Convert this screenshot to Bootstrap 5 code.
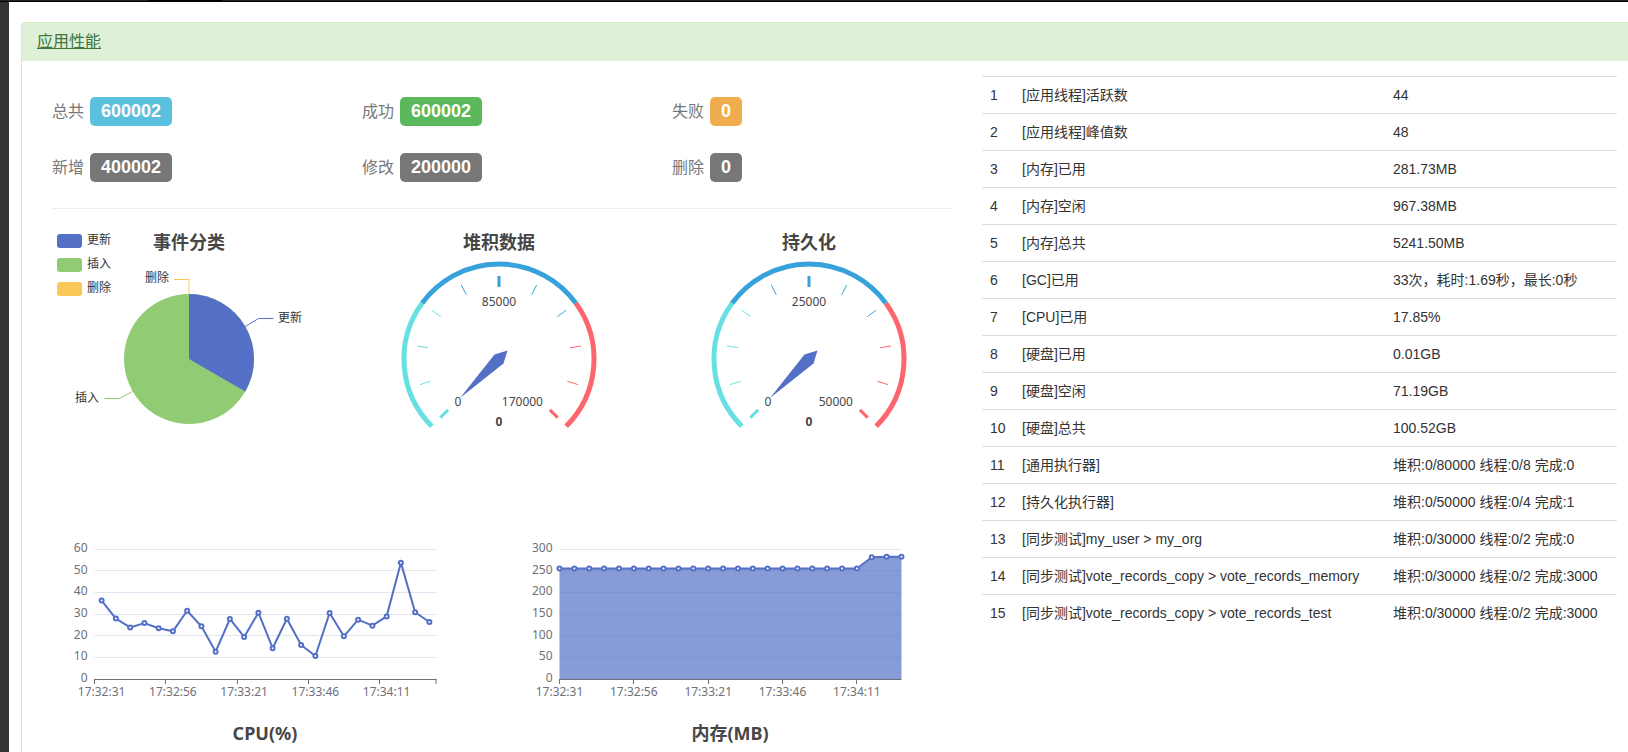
<!DOCTYPE html>
<html lang="zh-CN">
<head>
<meta charset="utf-8">
<meta name="viewport" content="width=device-width, initial-scale=1">
<title>应用性能</title>
<link rel="stylesheet" href="https://cdn.jsdelivr.net/npm/bootstrap@5.3.0/dist/css/bootstrap.min.css">
<style>
  body { font-family: "Liberation Sans", "Noto Sans CJK SC", sans-serif; font-size: 14px; line-height: 20px; color: #333; }
  .topbar { height: 2px; background: linear-gradient(#222 50%, #000 50%); }
  .topbar-tab { width: 74px; height: 2px; margin-left: 148px; background: #000; }
  .side-strip { width: 9px; background: #333; }
  .app-shell { height: calc(100vh - 2px); overflow: hidden; }
  .perf-panel { margin: 20px 0 0 12px; border: 1px solid #d6e9c6; border-right: 0; border-radius: 4px 0 0 0; }
  .perf-heading { background: #dff0d8; padding: 10px 15px; font-size: 16px; line-height: 18px; border-radius: 3px 0 0 0; }
  .perf-heading a { color: #3c763d; }
  .perf-body { padding: 15px 11px 15px 15px; }
  .perf-grid { display: grid; grid-template-columns: 930fr 635fr; column-gap: 15px; }
  .gut { --bs-gutter-x: 30px; }
  .stats { padding: 21px 0 26px; row-gap: 27px; }
  .stat { display: flex; align-items: center; gap: 6px; color: #777; font-size: 16px; }
  .stat-num { color: #fff; background: #777; font-size: 18px; font-weight: 700; line-height: 19px; padding: 5px 11px; border-radius: 5px; }
  .bg-total { background: #5bc0de; }
  .bg-ok { background: #5cb85c; }
  .bg-fail { background: #f0ad4e; }
  .rule { border: 0; border-top: 1px solid #eee; opacity: 1; margin: 0 15px 20px; }
  .chart { display: block; width: 100%; height: auto; font-family: "Noto Sans", "Noto Sans CJK SC", sans-serif; font-size: 12px; }
  .chart .ttl { font-size: 18px; font-weight: 700; fill: #464646; text-anchor: middle; }
  .chart .ax { fill: #6e7079; }
  .perf-table { margin: 0; color: #333; }
  .perf-table td { padding: 8px; border-top: 1px solid #ddd; border-bottom: 0; color: #333; }
  .perf-table .c-no { width: 32px; }
  .perf-table .c-val { width: 232px; white-space: nowrap; }
</style>
</head>
<body>
<header class="topbar"><div class="topbar-tab"></div></header>
<div class="app-shell d-flex">
  <aside class="side-strip flex-shrink-0"></aside>
  <main class="flex-grow-1">
    <section class="perf-panel">
      <div class="perf-heading"><a href="#perf">应用性能</a></div>
      <div class="perf-body" id="perf">
        <div class="perf-grid">
          <div>
            <div class="row gut mx-0 stats">
              <div class="col-4 stat"><span>总共</span><span class="stat-num bg-total">600002</span></div>
              <div class="col-4 stat"><span>成功</span><span class="stat-num bg-ok">600002</span></div>
              <div class="col-4 stat"><span>失败</span><span class="stat-num bg-fail">0</span></div>
              <div class="col-4 stat"><span>新增</span><span class="stat-num">400002</span></div>
              <div class="col-4 stat"><span>修改</span><span class="stat-num">200000</span></div>
              <div class="col-4 stat"><span>删除</span><span class="stat-num">0</span></div>
            </div>
            <hr class="rule">
            <div class="row gut mx-0">
              <div class="col-4">
                <svg class="chart" viewBox="0 0 280 300" role="img" aria-label="事件分类">
                  <rect x="5" y="5" width="25" height="14" rx="3" fill="#5470c6"/>
                  <rect x="5" y="29" width="25" height="14" rx="3" fill="#91cc75"/>
                  <rect x="5" y="53" width="25" height="14" rx="3" fill="#fac858"/>
                  <g fill="#333">
                    <text x="35" y="15">更新</text>
                    <text x="35" y="39">插入</text>
                    <text x="35" y="63">删除</text>
                    <text x="93" y="53">删除</text>
                    <text x="226" y="93">更新</text>
                    <text x="23" y="173">插入</text>
                  </g>
                  <text class="ttl" x="137" y="20">事件分类</text>
                  <circle cx="137" cy="130" r="65" fill="#91cc75"/>
                  <path d="M137 130V65A65 65 0 0 1 193.3 162.5Z" fill="#5470c6"/>
                  <g fill="none" stroke-width="1">
                    <path d="M137 65V50.500H122" stroke="#fac858"/>
                    <path d="M193.3 97.500L206.500 89.500H221.500" stroke="#5470c6"/>
                    <path d="M80.700 162.500L67.500 169.500H52.500" stroke="#91cc75"/>
                  </g>
                </svg>
              </div>
              <div class="col-4"><svg class="chart" viewBox="0 0 280 300" role="img" aria-label="堆积数据" data-gauge="堆积数据" data-mid="85000" data-max="170000"></svg></div>
              <div class="col-4"><svg class="chart" viewBox="0 0 280 300" role="img" aria-label="持久化" data-gauge="持久化" data-mid="25000" data-max="50000"></svg></div>
            </div>
            <div class="row gut mx-0">
              <div class="col-6"><svg class="chart" id="cpu" viewBox="0 0 435 250" role="img" aria-label="CPU(%)"></svg></div>
              <div class="col-6"><svg class="chart" id="mem" viewBox="0 0 435 250" role="img" aria-label="内存(MB)"></svg></div>
            </div>
          </div>
          <div>
            <table class="table perf-table">
              <tbody>
                <tr><td class="c-no">1</td><td>[应用线程]活跃数</td><td class="c-val">44</td></tr>
                <tr><td>2</td><td>[应用线程]峰值数</td><td>48</td></tr>
                <tr><td>3</td><td>[内存]已用</td><td>281.73MB</td></tr>
                <tr><td>4</td><td>[内存]空闲</td><td>967.38MB</td></tr>
                <tr><td>5</td><td>[内存]总共</td><td>5241.50MB</td></tr>
                <tr><td>6</td><td>[GC]已用</td><td>33次，耗时:1.69秒，最长:0秒</td></tr>
                <tr><td>7</td><td>[CPU]已用</td><td>17.85%</td></tr>
                <tr><td>8</td><td>[硬盘]已用</td><td>0.01GB</td></tr>
                <tr><td>9</td><td>[硬盘]空闲</td><td>71.19GB</td></tr>
                <tr><td>10</td><td>[硬盘]总共</td><td>100.52GB</td></tr>
                <tr><td>11</td><td>[通用执行器]</td><td>堆积:0/80000 线程:0/8 完成:0</td></tr>
                <tr><td>12</td><td>[持久化执行器]</td><td>堆积:0/50000 线程:0/4 完成:1</td></tr>
                <tr><td>13</td><td>[同步测试]my_user &gt; my_org</td><td>堆积:0/30000 线程:0/2 完成:0</td></tr>
                <tr><td>14</td><td>[同步测试]vote_records_copy &gt; vote_records_memory</td><td>堆积:0/30000 线程:0/2 完成:3000</td></tr>
                <tr><td>15</td><td>[同步测试]vote_records_copy &gt; vote_records_test</td><td>堆积:0/30000 线程:0/2 完成:3000</td></tr>
              </tbody>
            </table>
          </div>
        </div>
      </div>
    </section>
  </main>
</div>
<script src="https://cdn.jsdelivr.net/npm/bootstrap@5.3.0/dist/js/bootstrap.bundle.min.js"></script>
<script>
  // Gauges: 270 degree sweep with three colour bands
  const CX = 137, CY = 130;
  const polar = (r, deg) => {
    const a = deg * Math.PI / 180;
    return (CX + r * Math.cos(a)).toFixed(2) + ' ' + (CY - r * Math.sin(a)).toFixed(2);
  };
  const TEAL = '#67e0e3', BLUE = '#37a2da', RED = '#fd666d';
  document.querySelectorAll('[data-gauge]').forEach(svg => {
    let s = '';
    [[225, 144, TEAL], [144, 36, BLUE], [36, -45, RED]].forEach(([a, b, c]) => {
      s += `<path d="M${polar(95, a)}A95 95 0 0 1 ${polar(95, b)}" fill="none" stroke="${c}" stroke-width="5"/>`;
    });
    for (let i = 0; i <= 10; i++) {
      const deg = 225 - 27 * i, c = i < 4 ? TEAL : i < 8 ? BLUE : RED;
      s += `<path d="M${polar(83, deg)}L${polar(72, deg)}" stroke="${c}" stroke-width="${i % 5 ? 1 : 3}"/>`;
    }
    s += `<path d="M98 169L132.500 125.500L145.500 121.500L141.500 134.500Z" fill="#5470c6"/>
      <g fill="#464646">
        <text x="137" y="77" text-anchor="middle">${svg.dataset.mid}</text>
        <text x="96" y="177" text-anchor="middle">0</text>
        <text x="181" y="177" text-anchor="end">${svg.dataset.max}</text>
        <text x="137" y="197" text-anchor="middle" font-weight="700">0</text>
      </g>
      <text class="ttl" x="137" y="20">${svg.dataset.gauge}</text>`;
    svg.innerHTML = s;
  });

  // Time series charts
  function series(id, o) {
    const L = o.left, W = 342, T = 20, H = 130, n = o.data.length;
    const step = o.band ? W / n : W / (n - 1), off = o.band ? step / 2 : 0;
    const crisp = v => Math.floor(v) + 0.5;
    let s = '';
    for (let i = 0; i <= 6; i++) {
      const y = T + H - H * i / 6;
      if (i) s += `<path d="M${L} ${crisp(y)}H${L + W}" stroke="#e0e6f1"/>`;
      s += `<text class="ax" x="${L - 7}" y="${Math.round(y) + 3}" text-anchor="end">${o.max / 6 * i}</text>`;
    }
    const pts = o.data.map((v, i) => [L + off + i * step, T + H - H * v / o.max].map(k => k.toFixed(2)));
    const line = 'M' + pts.map(p => p.join(' ')).join('L');
    if (o.area) s += `<path d="${line}V${T + H}H${L}Z" fill="#5470c6" fill-opacity="0.7"/>`;
    s += `<path d="M${L} ${T + H + 0.5}H${L + W}" stroke="#6e7079"/>`;
    o.times.forEach((t, i) => {
      const x = L + i * 5 * step;
      s += `<path d="M${crisp(x)} ${T + H}v5" stroke="#6e7079"/>
        <text class="ax" x="${(x + off).toFixed(1)}" y="167" text-anchor="middle">${t}</text>`;
    });
    if (o.band) s += `<path d="M${L + W - 0.5} ${T + H}v5" stroke="#6e7079"/>`;
    s += `<path d="${line}" fill="none" stroke="#5470c6" stroke-width="2" stroke-linejoin="bevel"/>`;
    s += pts.map(p => `<circle cx="${p[0]}" cy="${p[1]}" r="2" fill="#fff" stroke="#5470c6" stroke-width="2"/>`).join('');
    s += `<text class="ttl" x="213" y="211">${o.title}</text>`;
    document.getElementById(id).innerHTML = s;
  }
  const times = ['17:32:31', '17:32:56', '17:33:21', '17:33:46', '17:34:11'];
  series('cpu', { title: 'CPU(%)', max: 60, left: 42.5, band: true, times,
    data: [36.2, 27.9, 23.8, 25.8, 23.4, 22, 31.5, 24.3, 12.6, 27.7, 19.4, 30.6, 14.2, 27.8, 15.7, 10.6, 30.5, 19.7, 27.4, 24.6, 28.9, 53.7, 30.8, 26.3] });
  series('mem', { title: '内存(MB)', max: 300, left: 42.5, area: true, times,
    data: [...Array(21).fill(255), 281, 282, 282] });
</script>
</body>
</html>
